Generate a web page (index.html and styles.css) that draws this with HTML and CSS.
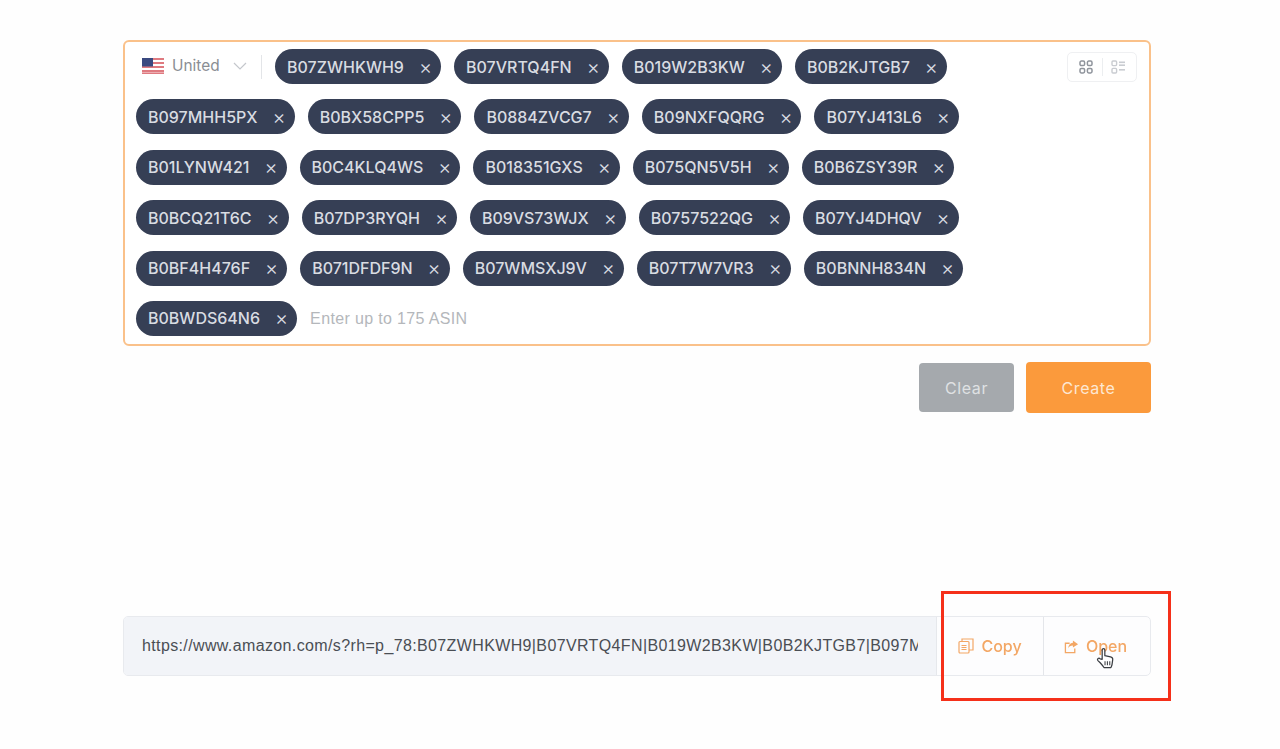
FILE: index.html
```html
<!DOCTYPE html>
<html lang="en">
<head>
<meta charset="utf-8">
<title>ASIN link builder</title>
<link rel="stylesheet" href="styles.css">
</head>
<body>
<main class="page">
  <section class="box">
    <div class="country">
      <svg class="flag" viewBox="0 0 22 16" width="22" height="16">
        <rect width="22" height="16" fill="#fff"/>
        <g fill="#df7a80">
          <rect width="22" height="2"/><rect y="4" width="22" height="2"/><rect y="8" width="22" height="2"/><rect y="12" width="22" height="2"/><rect y="14.4" width="22" height="1.6"/>
        </g>
        <rect width="11" height="8.5" fill="#3a4a80"/>
      </svg>
      <span class="country-name">United</span>
      <svg class="chev" viewBox="0 0 14 8" width="14" height="8"><path d="M1 1l6 6 6-6" fill="none" stroke="#c4c7cc" stroke-width="1.2"/></svg>
    </div>
    <span class="chip">B07ZWHKWH9<i class="x">×</i></span>
    <span class="chip">B07VRTQ4FN<i class="x">×</i></span>
    <span class="chip">B019W2B3KW<i class="x">×</i></span>
    <span class="chip">B0B2KJTGB7<i class="x">×</i></span>
    <span class="chip">B097MHH5PX<i class="x">×</i></span>
    <span class="chip">B0BX58CPP5<i class="x">×</i></span>
    <span class="chip">B0884ZVCG7<i class="x">×</i></span>
    <span class="chip">B09NXFQQRG<i class="x">×</i></span>
    <span class="chip">B07YJ413L6<i class="x">×</i></span>
    <span class="chip">B01LYNW421<i class="x">×</i></span>
    <span class="chip">B0C4KLQ4WS<i class="x">×</i></span>
    <span class="chip">B018351GXS<i class="x">×</i></span>
    <span class="chip">B075QN5V5H<i class="x">×</i></span>
    <span class="chip">B0B6ZSY39R<i class="x">×</i></span>
    <span class="chip">B0BCQ21T6C<i class="x">×</i></span>
    <span class="chip">B07DP3RYQH<i class="x">×</i></span>
    <span class="chip">B09VS73WJX<i class="x">×</i></span>
    <span class="chip">B0757522QG<i class="x">×</i></span>
    <span class="chip">B07YJ4DHQV<i class="x">×</i></span>
    <span class="chip">B0BF4H476F<i class="x">×</i></span>
    <span class="chip">B071DFDF9N<i class="x">×</i></span>
    <span class="chip">B07WMSXJ9V<i class="x">×</i></span>
    <span class="chip">B07T7W7VR3<i class="x">×</i></span>
    <span class="chip">B0BNNH834N<i class="x">×</i></span>
    <span class="chip">B0BWDS64N6<i class="x">×</i></span>
    <span class="placeholder">Enter up to 175 ASIN</span>
    <div class="view-toggle">
      <svg viewBox="0 0 14 14" width="14" height="14"><g fill="none" stroke="#8f949c" stroke-width="1.5"><rect x="1" y="1" width="4.6" height="4.6" rx="1.4"/><rect x="8.4" y="1" width="4.6" height="4.6" rx="1.4"/><rect x="1" y="8.4" width="4.6" height="4.6" rx="1.4"/><rect x="8.4" y="8.4" width="4.6" height="4.6" rx="1.4"/></g></svg>
      <span class="toggle-sep"></span>
      <svg viewBox="0 0 14 14" width="14" height="14"><g fill="none" stroke="#c9ccd1" stroke-width="1.4"><rect x="1" y="1" width="4.6" height="4.6" rx="1"/><rect x="1" y="8.4" width="4.6" height="4.6" rx="1"/></g><g fill="#c9ccd1"><rect x="8" y="1.5" width="6" height="1.6"/><rect x="8" y="4.4" width="6" height="1.6"/><rect x="8" y="9" width="6" height="1.6"/></g></svg>
    </div>
  </section>

  <div class="actions">
    <button class="btn clear">Clear</button>
    <button class="btn create">Create</button>
  </div>

  <section class="result">
    <div class="url"><span class="url-text">https://www.amazon.com/s?rh=p_78:B07ZWHKWH9|B07VRTQ4FN|B019W2B3KW|B0B2KJTGB7|B097MHH5PX|B0BX58CPP5</span></div>
    <div class="link-btn">
      <svg viewBox="0 0 16 16" width="16" height="16"><g fill="none" stroke="#f3a765" stroke-width="1.2"><rect x="1" y="3.5" width="10" height="11.5" rx="1"/><path d="M4 3.5V1h11v11h-4"/><path d="M3.5 7.5h5M3.5 9.5h5M3.5 11.5h5"/></g></svg>
      <span>Copy</span>
    </div>
    <div class="link-btn open">
      <svg viewBox="0 0 16 16" width="15" height="15"><g fill="none" stroke="#f3a765" stroke-width="1.4"><path d="M6 4.5H1.5v10h10V10"/></g><path d="M9.5 1.5L15 5.5 9.5 9V7C7 7 5.5 8 4.5 10 4.5 6.5 6.5 4.2 9.5 4z" fill="#f3a765"/></svg>
      <span>Open</span>
    </div>
  </section>
</main>

<div class="highlight"></div>
<svg class="cursor" viewBox="0 0 20 24" width="19" height="23">
  <path d="M6.5 13V3.2c0-2 2.8-2 2.8 0V9l6 1.2c1.6.4 2.5 1.4 2.3 3l-.7 5c-.2 1.4-.7 2.2-1.2 3.3H8.4c-1-1.6-2.2-3-4-5L2 14.2c-1.3-1.8 1-3.4 2.4-1.8z" fill="#fff" stroke="#3a3d42" stroke-width="1.3" stroke-linejoin="round"/>
  <path d="M9.5 15v4M12 15v4M14.5 15v4" stroke="#3a3d42" stroke-width="1.1"/>
</svg>
</body>
</html>
```
FILE: styles.css
```css
* { box-sizing: border-box; }
html, body { margin: 0; height: 100%; }
body {
  background: #fefefe;
  font-family: "Liberation Sans", Arial, sans-serif;
  overflow: hidden;
  position: relative;
  filter: blur(0.6px);
}
.page {
  padding: 40px 129px 0 123px;
  display: flex;
  flex-direction: column;
}
.box {
  position: relative;
  height: 306px;
  border: 2px solid #fac18a;
  border-radius: 6px;
  padding: 7px 60px 0 11px;
  display: flex;
  flex-wrap: wrap;
  align-content: flex-start;
  align-items: center;
  column-gap: 13px;
  row-gap: 15.4px;
  background: #fff;
}
.country {
  display: flex;
  align-items: center;
  width: 126px;
  height: 35px;
  padding-left: 6px;
  position: relative;
}
.country::after {
  content: "";
  position: absolute;
  right: 0;
  top: 6px;
  height: 24px;
  width: 1px;
  background: #e3e5e8;
}
.flag { flex: none; margin-top: -1px; }
.country-name {
  margin-left: 8px;
  margin-top: -2px;
  font: 15.4px "Inter", sans-serif;
  color: #8a8e94;
}
.chev { margin-left: 13px; margin-top: -1px; }
.chip {
  display: inline-flex;
  align-items: center;
  height: 35px;
  padding: 0 9px 0 12px;
  border-radius: 18px;
  background: #363f55;
  color: #d9dce2;
  font: 500 16px "Inter", sans-serif;
  white-space: nowrap;
}
.x {
  font: 300 20px/1 "Inter", sans-serif;
  color: #d9dce2;
  margin-left: 15px;
}
.placeholder {
  font: 16px "Liberation Sans", sans-serif;
  letter-spacing: 0.35px;
  color: #b4b7bb;
  margin-top: 1px;
}
.view-toggle {
  position: absolute;
  top: 10px;
  right: 12px;
  width: 70px;
  height: 30px;
  border: 1px solid #eff0f2;
  border-radius: 5px;
  display: flex;
  align-items: center;
  justify-content: space-between;
  padding: 0 11px;
}
.toggle-sep { width: 1px; height: 18px; background: #eceef0; }
.actions {
  display: flex;
  justify-content: flex-end;
  align-items: center;
  gap: 12px;
  margin-top: 16px;
}
.btn {
  border: 0;
  border-radius: 4px;
  font: 400 16px "Inter", sans-serif;
  letter-spacing: 0.6px;
}
.clear { width: 95px; height: 49px; background: #a5a9ad; color: #dfe1e3; }
.create { width: 125px; height: 51px; background: #fb9a3c; color: #fde7d2; }
.result {
  margin-top: 203px;
  height: 60px;
  display: flex;
  border: 1px solid #e8eaee;
  border-radius: 5px;
  overflow: hidden;
  background: #fdfdfe;
}
.url {
  width: 813px;
  flex: none;
  padding: 0 18px;
  display: flex;
  align-items: center;
  background: #f2f4f8;
  border-right: 1px solid #e6e8ec;
}
.url-text {
  font-size: 16px;
  letter-spacing: 0.37px;
  color: #4a4e54;
  white-space: nowrap;
  overflow: hidden;
  width: 100%;
}
.link-btn {
  flex: 1;
  display: flex;
  align-items: center;
  justify-content: center;
  gap: 7px;
  font: 500 16px "Inter", sans-serif;
  color: #f3a765;
}
.link-btn + .link-btn { border-left: 1px solid #e4e6ea; }
.open { flex: 0 0 107px; padding-right: 3px; }
.highlight {
  position: absolute;
  left: 941px;
  top: 591px;
  width: 230px;
  height: 110px;
  border: 3px solid #f5301a;
}
.cursor {
  position: absolute;
  left: 1096px;
  top: 647px;
}
```
